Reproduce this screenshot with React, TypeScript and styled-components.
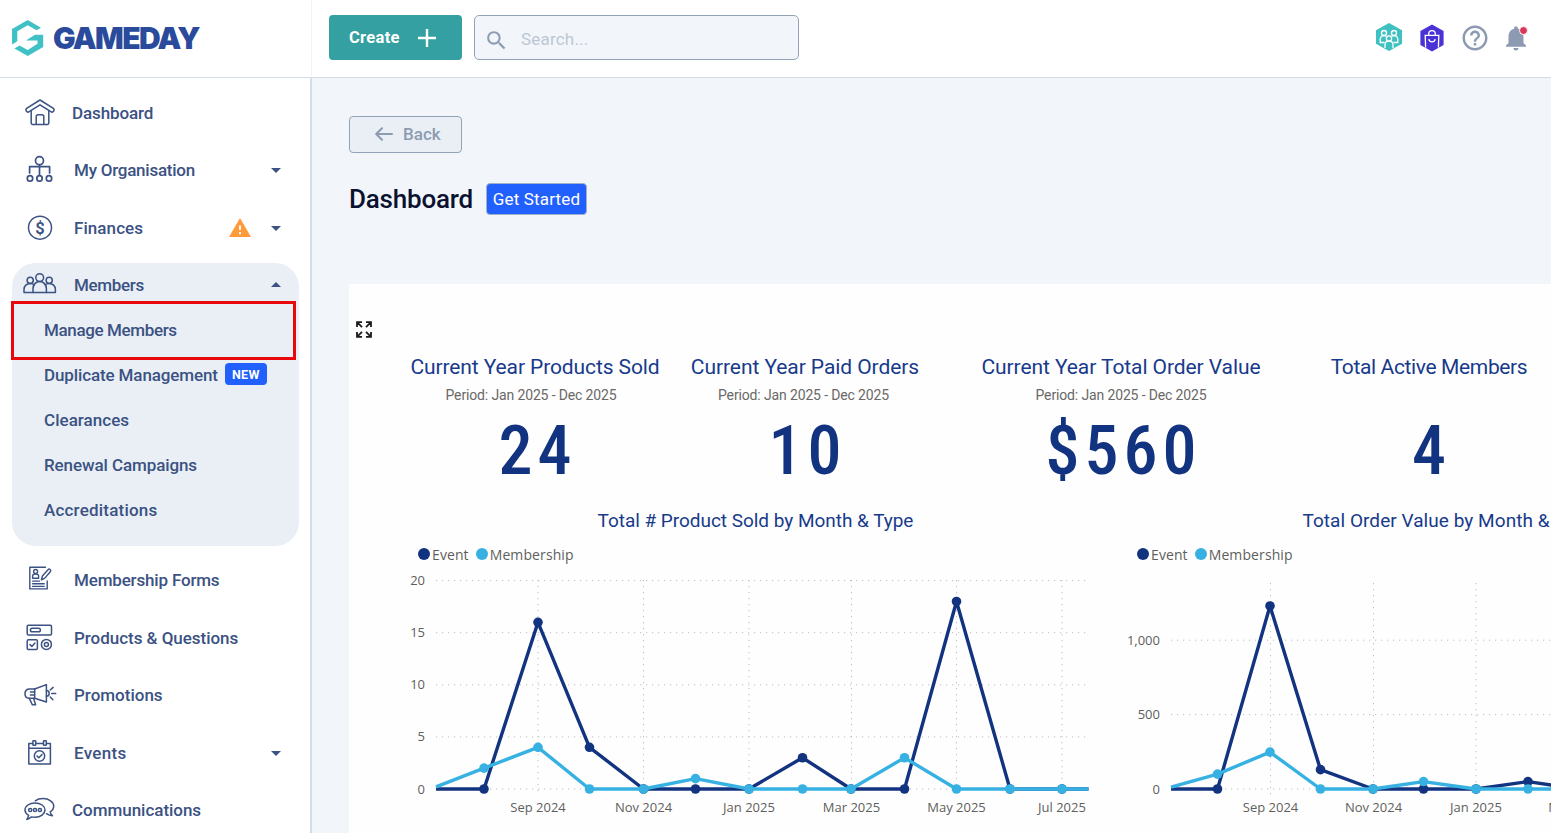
import { ReactNode } from 'react';
import styled, { createGlobalStyle, css } from 'styled-components';
import { MdHelpOutline, MdNotifications, MdSearch } from 'react-icons/md';

const colors = {
  nav: '#3b5283',
  navActive: '#e9eff5',
  border: '#d3dde7',
  page: '#f2f6fb',
  muted: '#8c9bb1',
  teal: '#34a0a2',
  blue: '#2160fd',
  event: '#12337f',
  member: '#37b1e2',
  heading: '#173a8b',
  axis: '#605e5c',
};

const GlobalStyle = createGlobalStyle`
  * { box-sizing: border-box; }
  body {
    margin: 0;
    overflow: hidden;
    background: #fff;
    font-family: Roboto, 'Liberation Sans', sans-serif;
  }
  #root { height: 100vh; }
  button { font-family: inherit; cursor: pointer; }
`

interface ITracked {
  $track?: number;
}

const tracking = css<ITracked>`letter-spacing: ${p => p.$track ?? 0}px;`

const Layout = styled.div`
  display: grid;
  grid-template-columns: 312px 1fr;
  grid-template-rows: 78px 755px;
  height: 833px;
  overflow: hidden;
`

/* ---------- header ---------- */
const Brand = styled.div`
  display: flex;
  align-items: center;
  gap: 9px;
  padding: 0 0 2px 12px;
  border-bottom: 1px solid ${colors.border};
  border-right: 1px solid #f0f4f8;
`
const BrandName = styled.span`
  font: 900 30px/1 Inter, sans-serif;
  letter-spacing: -1.6px;
  color: #2a4a9c;
`
const TopBar = styled.header`
  display: flex;
  align-items: center;
  padding: 0 20px 2px 17px;
  border-bottom: 1px solid ${colors.border};
`
const CreateButton = styled.button<ITracked>`
  display: flex;
  align-items: center;
  justify-content: space-between;
  width: 133px;
  height: 45px;
  padding: 0 26px 0 20px;
  border: 0;
  border-radius: 4px;
  background: ${colors.teal};
  color: #fff;
  font-size: 16.5px;
  font-weight: 700;
  ${tracking}
`
const SearchBox = styled.div<ITracked>`
  display: flex;
  align-items: center;
  gap: 12px;
  width: 325px;
  height: 45px;
  margin-left: 12px;
  padding: 3px 0 0 9px;
  border: 1px solid #92a3b8;
  border-radius: 5px;
  background: ${colors.page};
  color: ${colors.muted};
  font-size: 17px;
  ${tracking}

  & > svg { margin-top: 2px; }
  & > span { color: #bcc7d4; }
`
const TopIcons = styled.div`
  display: flex;
  align-items: center;
  gap: 14px;
  margin-left: auto;
  color: ${colors.muted};

  & > svg:first-child { margin: -1px 1px 0 0; }
`
const BellWrap = styled.div`
  position: relative;
  display: flex;
  margin-left: -3px;
`
const BellDot = styled.i`
  position: absolute;
  top: 3px;
  right: 3px;
  width: 9px;
  height: 9px;
  border: 1px solid #fff;
  border-radius: 50%;
  background: #d93558;
`

/* ---------- sidebar ---------- */
const Sidebar = styled.nav`
  padding: 6px 11px 0 12px;
  border-right: 2px solid ${colors.border};
  overflow: hidden;
`
const NavRow = styled.div<{ $compact?: boolean }>`
  display: flex;
  align-items: center;
  height: ${p => p.$compact ? 45 : 57.5}px;
  padding: 0 18px ${p => p.$compact ? 1 : 0}px 10px;
  color: ${colors.nav};

  & > svg:first-child { flex: none; }
`
const NavLabel = styled.span<ITracked & { $near?: boolean }>`
  margin-left: ${p => p.$near ? 14 : 16}px;
  font-size: 17px;
  font-weight: 500;
  white-space: nowrap;
  ${tracking}
`
const NavEnd = styled.div`
  display: flex;
  align-items: center;
  gap: 20px;
  margin-left: auto;
`
const Caret = styled.i<{ $up?: boolean }>`
  width: 0;
  height: 0;
  margin-top: ${p => p.$up ? 0 : 1}px;
  border: 5px solid transparent;
  border-${p => p.$up ? 'top' : 'bottom'}-width: 0;
  border-${p => p.$up ? 'bottom' : 'top'}-color: ${colors.nav};
`
const NavGroup = styled.div`
  margin: 6px 0;
  padding-bottom: 13px;
  border-radius: 24px;
  background: ${colors.navActive};
`
const SubRow = styled.div`
  position: relative;
  display: flex;
  align-items: center;
  height: 45px;
  padding-left: 16px;
  color: ${colors.nav};
`
const Highlight = styled.div`
  position: absolute;
  inset: -7px 3px -7px -1px;
  border: 3px solid #e8070c;
`
const NewBadge = styled.span<ITracked>`
  width: 42px;
  height: 22px;
  margin: -2px 0 0 7px;
  border-radius: 4px;
  background: ${colors.blue};
  color: #fff;
  font-size: 12.5px;
  font-weight: 700;
  line-height: 23px;
  text-align: center;
  ${tracking}
`

/* ---------- content ---------- */
const Main = styled.main`
  padding: 38px 0 0 37px;
  background: ${colors.page};
  overflow: hidden;
`
const BackButton = styled.button<ITracked>`
  display: flex;
  align-items: center;
  gap: 10px;
  width: 113px;
  height: 37px;
  padding: 0 0 1px 25px;
  border: 1px solid #92a3b8;
  border-radius: 4px;
  background: #e9eff5;
  color: ${colors.muted};
  font-size: 17px;
  font-weight: 500;
  ${tracking}
`
const TitleRow = styled.div`
  display: flex;
  align-items: center;
  gap: 13px;
  height: 32px;
  margin-top: 30px;
`
const PageTitle = styled.h1<ITracked>`
  width: 124px;
  margin: 0;
  color: #0b1230;
  font-size: 26px;
  font-weight: 500;
  white-space: nowrap;
  ${tracking}
`
const StartButton = styled.button<ITracked>`
  width: 101px;
  height: 32px;
  padding: 0;
  border: 1px solid #9fb0c8;
  border-radius: 4px;
  background: ${colors.blue};
  color: #fff;
  font-size: 17px;
  ${tracking}
`
const Report = styled.section`
  width: 1500px;
  height: 560px;
  margin-top: 69px;
  padding: 37px 0 0 7px;
  background: #fefefe;
`
const ExpandIcon = styled.svg`
  display: block;
  fill: none;
  stroke: #1c1c1c;
  stroke-width: 1.8;
`
const Stats = styled.div`
  display: grid;
  grid-template-columns: 270px 270px 362px 254px;
  margin: 16px 0 0 44px;
`
const Stat = styled.div`
  display: flex;
  flex-direction: column;
  align-items: center;
  white-space: nowrap;
`
const StatTitle = styled.h2<ITracked>`
  height: 26px;
  margin: 0;
  color: ${colors.heading};
  font-size: 21px;
  font-weight: 400;
  line-height: 26px;
  ${tracking}
`
const StatPeriod = styled.span<ITracked & { $pull?: number }>`
  height: 20px;
  margin: 5px ${p => p.$pull ?? 0}px 0 0;
  color: #6a6866;
  font-size: 14px;
  font-weight: 400;
  line-height: 20px;
  ${tracking}
`
const StatValue = styled.strong<ITracked>`
  margin: 6px 0 1px;
  padding-left: 5px;
  color: ${colors.event};
  font-size: 68px;
  font-weight: 500;
  font-stretch: 75%;
  line-height: 80px;
  ${tracking}
`
const Charts = styled.div`
  display: flex;
  gap: 19px;
  margin: 17px 0 0 44px;
`
const ChartCard = styled.figure`
  width: 700px;
  margin: 0;
`
const ChartTitle = styled.figcaption<ITracked & { $indent: number }>`
  height: 24px;
  padding-left: ${p => p.$indent}px;
  color: ${colors.heading};
  font-size: 19px;
  line-height: 24px;
  white-space: nowrap;
  ${tracking}
`
const Legend = styled.div`
  display: flex;
  gap: 7px;
  height: 19px;
  margin: 12px 0 0 18px;
  color: ${colors.axis};
  font: 14px/20px 'Open Sans', sans-serif;
  letter-spacing: .1px;
`
const LegendItem = styled.span<{ $color: string }>`
  display: flex;
  align-items: center;
  gap: 2px;

  &::before {
    content: '';
    width: 12px;
    height: 12px;
    margin-top: -2px;
    border-radius: 50%;
    background: ${p => p.$color};
  }
`
const Plot = styled.svg`
  display: block;
  overflow: visible;

  text {
    fill: ${colors.axis};
    font: 13px 'Open Sans', sans-serif;
  }
`

function Icon({ children, stroke = 1.5 }: { children: ReactNode; stroke?: number }) {
  return <svg width={36} height={36} viewBox='0 0 36 36' fill='none' stroke='currentColor'
              strokeWidth={stroke} strokeLinecap='round' strokeLinejoin='round'>
    {children}
  </svg>
}

const icons = {
  home: <Icon>
    <path d='M18 5 5 13.2a2 2 0 0 0 2.2 3.5L18 9.8l10.8 6.9a2 2 0 0 0 2.2-3.5Z' />
    <path d='M9.2 16v12a1.5 1.5 0 0 0 1.5 1.5h14.6a1.5 1.5 0 0 0 1.5-1.5V16' />
    <path d='M14.2 29.3v-7.6a2 2 0 0 1 2-2h3.6a2 2 0 0 1 2 2v7.6' />
  </Icon>,
  org: <Icon stroke={1.7}>
    <circle cx='17.5' cy='8.7' r='4' />
    <path d='M17.5 12.8v10M7.6 21v-6.3h20V21' />
    <circle cx='8' cy='26.4' r='2.7' /><circle cx='17.5' cy='26.4' r='2.7' /><circle cx='27' cy='26.4' r='2.7' />
  </Icon>,
  finance: <Icon>
    <circle cx='18' cy='17.7' r='11.5' />
    <text x='18' y='23.6' textAnchor='middle' fontSize='16.5' fontWeight='600' fill='currentColor' stroke='none'>$</text>
  </Icon>,
  members: <Icon>
    <circle cx='17.7' cy='10.6' r='3.9' /><circle cx='8.2' cy='13.3' r='3.1' /><circle cx='27.2' cy='13.3' r='3.1' />
    <path d='M11 25.4v-3.6c0-4.2 2.8-7.2 6.7-7.2s6.7 3 6.7 7.2v3.6z' />
    <path d='M11 25.4H2v-3c0-3.4 2.6-6 6.2-6 1.7 0 3 .5 4 1.4M24.4 25.4h9v-3c0-3.4-2.6-6-6.2-6-1.7 0-3 .5-4 1.4' />
  </Icon>,
  forms: <Icon stroke={1.4}>
    <path d='M23.5 5.3H7.8v21.6h17.4v-8' />
    <circle cx='13.6' cy='9.5' r='2' />
    <path d='M10.6 16.2v-2.3c0-1 1.2-1.9 3-1.9s3 .9 3 1.9v2.3zM10.6 19.1h6.8M10.6 21.8h11.6M10.6 24.4h11.6' />
    <path d='m19.4 17.9 1-3.9 5.6-6.3a1.5 1.5 0 0 1 2.3 2l-5.5 6.4z' />
  </Icon>,
  products: <Icon>
    <rect x='5.2' y='5.2' width='24.3' height='9.7' rx='1.2' />
    <rect x='8.4' y='8.2' width='10' height='3.6' rx='1.8' />
    <rect x='5.2' y='19.7' width='10.2' height='9.7' rx='1.2' />
    <path d='m8 24.6 1.9 1.8 3-3.4' />
    <circle cx='24.4' cy='24.4' r='5' /><circle cx='24.4' cy='24.4' r='2' />
  </Icon>,
  promo: <Icon>
    <path d='M12.7 12H7a4.7 4.7 0 0 0 0 9.3h5.7L24.4 25V7.6z' />
    <path d='M12.7 12v9.3M8.4 14.9h4M8.4 18h4M7.4 21.6l3 6.2h3.2l-2-6.2M24.4 13.6a2.8 2.8 0 0 1 0 5.6M28.3 13l2.8-2.6M29.7 16.4h4M28.3 20l2.6 2.8' />
  </Icon>,
  events: <Icon>
    <path d='M10.6 8.4H6.8V29h21.6V8.4h-3.6M14 8.4h7.2M6.8 13.2h21.6' />
    <rect x='10.9' y='5.8' width='2.8' height='4.4' rx='.5' /><rect x='21.5' y='5.8' width='2.8' height='4.4' rx='.5' />
    <circle cx='17.5' cy='21' r='5.2' />
    <path d='m15 21 1.8 1.7 3.2-3.3' />
  </Icon>,
  comms: <Icon>
    <path d='M6.6 23.4C4.3 22.1 3 20.2 3 18.1c0-4 4.4-7.2 10-7.2s10 3.2 10 7.2-4.4 7.2-10 7.2c-1.3 0-2.4-.1-3.5-.4-1.3 1.2-2.8 2-4.7 2.5.9-1.1 1.5-2.3 1.8-4z' />
    <path d='M13.3 8.8C15.2 7.3 18 6.600 21 6.600c6 0 10.7 3.3 10.7 7.5 0 2.4-1.3 4.5-3.5 5.8.3 1.6 1.1 2.9 2.3 3.9-2.4-.1-4.4-.9-5.9-2.100' />
    <circle cx='8.2' cy='18' r='1.6' /><circle cx='13' cy='18' r='1.6' /><circle cx='17.9' cy='18' r='1.6' />
  </Icon>,
};

const Logo = () => <svg width='32' height='36' viewBox='12 20 32 36' fill='#3fc1c5'>
  <path d='M27.7 20 41 27.7 36.5 30.2 27.7 25.2 17.3 31.3V41.2L12 44.5V29z' />
  <path d='M14.5 48.5 19.5 45.4 27.7 50 37.5 43.7V40.4H26L35 34.7H43.2V47L27.7 56z' />
</svg>

const WarningIcon = () => <svg width='22' height='19' viewBox='0 0 22 19'>
  <path d='M11 0 22 19H0z' fill='#ff9a39' />
  <path d='M11 7.5v4.6M11 14v2.2' stroke='#fff' strokeWidth='2' />
</svg>

const ClubIcon = () => <svg width='28' height='30' viewBox='0 0 28 30'>
  <path d='M14 1 27 8.3V21.7L14 29 1 21.7V8.3z' fill='#3fc1c2' />
  <g fill='none' stroke='#fff' strokeWidth='1.3'>
    <circle cx='9' cy='11' r='2.5' /><circle cx='19' cy='11' r='2.5' />
    <path d='M9.5 20.5H5.2v-3c0-2.2 1.5-4 3.8-4 1 0 1.8.3 2.4.8M18.5 20.5h4.3v-3c0-2.2-1.5-4-3.8-4-1 0-1.8.3-2.4.8' />
    <circle cx='14' cy='16.5' r='2.6' fill='#3fc1c2' />
    <path d='M10 26v-3.2c0-2.2 1.7-3.7 4-3.7s4 1.5 4 3.7V26' />
  </g>
</svg>

const ShopIcon = () => <svg width='28' height='30' viewBox='0 0 28 30'>
  <path d='M14 1.5 25.6 8V22L14 28.5 2.4 22V8z' fill='#4a33d6' />
  <g fill='none' stroke='#fff' strokeWidth='1.3'>
    <path d='M7.6 24.5 7.2 12.3H20.8L20.4 24.5M10.7 12V11a3.3 3.3 0 0 1 6.6 0v1' />
    <path d='M10.8 16.2c.4 1.7 1.6 2.7 3.2 2.7s2.8-1 3.2-2.7' />
  </g>
</svg>

interface ISeries {
  color: string;
  values: number[];
}
interface IChartProps {
  x: number[];
  ticks: [number, string][];
  months: [number, string][];
  top: number;
  unit: number;
  series: ISeries[];
  axisEnd: number;
}

const ZERO = 225;

function LineChart({ x, ticks, months, top, unit, series, axisEnd }: IChartProps) {
  const y = (v: number) => ZERO - v * unit;
  return <Plot width={700} height={260}>
    <g stroke='#bdbdbd' strokeDasharray='1.2 4.8'>
      {ticks.map(([v]) => <line key={v} x1={x[0]} x2={axisEnd} y1={y(v)} y2={y(v)} />)}
      {months.map(([mx]) => <line key={mx} x1={mx} x2={mx} y1={top} y2={ZERO + 7} />)}
    </g>
    {ticks.map(([v, label]) => <text key={v} x={x[0] - 11} y={y(v) + 4.5} textAnchor='end'>{label}</text>)}
    {months.map(([mx, label]) => <text key={mx} x={mx} y={ZERO + 23} textAnchor='middle'>{label}</text>)}
    {series.map(s => <g key={s.color} fill={s.color}>
      <polyline points={s.values.map((v, i) => `${x[i]},${y(v)}`).join(' ')}
                fill='none' stroke={s.color} strokeWidth='3.4' strokeLinejoin='round' />
      {s.values.slice(1, -1).map((v, i) => <circle key={i} cx={x[i + 1]} cy={y(v)} r='4.8' />)}
    </g>)}
  </Plot>
}

const soldChart: IChartProps = {
  x: [36, 84, 138, 189.5, 243.5, 295.5, 349, 402.5, 451, 504.5, 556.5, 610, 662, 688.5],
  ticks: [[0, '0'], [5, '5'], [10, '10'], [15, '15'], [20, '20']],
  months: [[138, 'Sep 2024'], [243.5, 'Nov 2024'], [349, 'Jan 2025'], [451.5, 'Mar 2025'], [556.5, 'May 2025'], [662, 'Jul 2025']],
  top: 16,
  unit: 10.42,
  axisEnd: 688,
  series: [
    { color: colors.event, values: [0, 0, 16, 4, 0, 0, 0, 3, 0, 0, 18, 0, 0, 0] },
    { color: colors.member, values: [.2, 2, 4, 0, 0, 1, 0, 0, 0, 3, 0, 0, 0, 0] },
  ],
};
const orderChart: IChartProps = {
  x: [52, 98.5, 151, 201.5, 254, 304.5, 357, 409, 458, 510],
  ticks: [[0, '0'], [500, '500'], [1000, '1,000']],
  months: [[151.5, 'Sep 2024'], [254.5, 'Nov 2024'], [357, 'Jan 2025'], [458, 'Mar 2025']],
  top: 19,
  unit: .1488,
  axisEnd: 640,
  series: [
    { color: colors.event, values: [0, 0, 1230, 130, 0, 0, 0, 50, 0, 0] },
    { color: colors.member, values: [12, 100, 248, 0, 0, 50, 0, 0, 0, 0] },
  ],
};

const ChartLegend = () => <Legend>
  <LegendItem $color={colors.event}>Event</LegendItem>
  <LegendItem $color={colors.member}>Membership</LegendItem>
</Legend>

const PERIOD = 'Period: Jan 2025 - Dec 2025';
const stats = [
  { title: 'Current Year Products Sold', track: -.1, period: PERIOD, pull: 8, value: '24' },
  { title: 'Current Year Paid Orders', track: -.07, period: PERIOD, pull: 3, value: '10' },
  { title: 'Current Year Total Order Value', track: -.08, period: PERIOD, value: '$560' },
  { title: 'Total Active Members', track: -.36, value: '4' },
];

export default function App() {
  return <Layout>
    <GlobalStyle />
    <Brand><Logo /><BrandName>GAMEDAY</BrandName></Brand>
    <TopBar>
      <CreateButton $track={.3}>
        Create
        <svg width='18' height='18' stroke='#fff' strokeWidth='2.4'><path d='M9 0v18M0 9h18' /></svg>
      </CreateButton>
      <SearchBox $track={.2}><MdSearch size={25} /><span>Search...</span></SearchBox>
      <TopIcons>
        <ClubIcon /><ShopIcon />
        <MdHelpOutline size={30} />
        <BellWrap><MdNotifications size={30} /><BellDot /></BellWrap>
      </TopIcons>
    </TopBar>
    <Sidebar>
      <NavRow>{icons.home}<NavLabel $near $track={-.1}>Dashboard</NavLabel></NavRow>
      <NavRow>{icons.org}<NavLabel $track={-.24}>My Organisation</NavLabel><NavEnd><Caret /></NavEnd></NavRow>
      <NavRow>{icons.finance}<NavLabel $track={.07}>Finances</NavLabel><NavEnd><WarningIcon /><Caret /></NavEnd></NavRow>
      <NavGroup>
        <NavRow $compact>{icons.members}<NavLabel $track={-.33}>Members</NavLabel><NavEnd><Caret $up /></NavEnd></NavRow>
        <SubRow><NavLabel $track={-.37}>Manage Members</NavLabel><Highlight /></SubRow>
        <SubRow><NavLabel $track={-.12}>Duplicate Management</NavLabel><NewBadge $track={.3}>NEW</NewBadge></SubRow>
        <SubRow><NavLabel $track={.03}>Clearances</NavLabel></SubRow>
        <SubRow><NavLabel $track={-.1}>Renewal Campaigns</NavLabel></SubRow>
        <SubRow><NavLabel $track={.2}>Accreditations</NavLabel></SubRow>
      </NavGroup>
      <NavRow>{icons.forms}<NavLabel $track={-.17}>Membership Forms</NavLabel></NavRow>
      <NavRow>{icons.products}<NavLabel $track={-.03}>Products &amp; Questions</NavLabel></NavRow>
      <NavRow>{icons.promo}<NavLabel>Promotions</NavLabel></NavRow>
      <NavRow>{icons.events}<NavLabel $track={.3}>Events</NavLabel><NavEnd><Caret /></NavEnd></NavRow>
      <NavRow>{icons.comms}<NavLabel $near $track={-.03}>Communications</NavLabel></NavRow>
    </Sidebar>
    <Main>
      <BackButton>
        <svg width='18' height='14' fill='none' stroke='currentColor' strokeWidth='2' strokeLinecap='round' strokeLinejoin='round'>
          <path d='M17 7H1.5M7 1.2 1.2 7 7 12.8' />
        </svg>
        Back
      </BackButton>
      <TitleRow>
        <PageTitle $track={-.2}>Dashboard</PageTitle>
        <StartButton $track={.15}>Get Started</StartButton>
      </TitleRow>
      <Report>
        <ExpandIcon width='16' height='17' viewBox='0 0 16 17'>
          <path d='M1 6V1.2h5M1.5 1.7 6 6.2M10 1.2h5V6M14.5 1.7 10 6.2M1 11v4.8h5M1.5 15.3 6 10.8M10 15.8h5V11M14.5 15.3 10 10.8' />
        </ExpandIcon>
        <Stats>
          {stats.map(s => <Stat key={s.title}>
            <StatTitle $track={s.track}>{s.title}</StatTitle>
            <StatPeriod $track={-.14} $pull={s.pull}>{s.period}</StatPeriod>
            <StatValue $track={5}>{s.value}</StatValue>
          </Stat>)}
        </Stats>
        <Charts>
          <ChartCard>
            <ChartTitle $indent={197.5} $track={-.03}>Total # Product Sold by Month &amp; Type</ChartTitle>
            <ChartLegend />
            <LineChart {...soldChart} />
          </ChartCard>
          <ChartCard>
            <ChartTitle $indent={183.5} $track={.05}>Total Order Value by Month &amp; Type</ChartTitle>
            <ChartLegend />
            <LineChart {...orderChart} />
          </ChartCard>
        </Charts>
      </Report>
    </Main>
  </Layout>
}
